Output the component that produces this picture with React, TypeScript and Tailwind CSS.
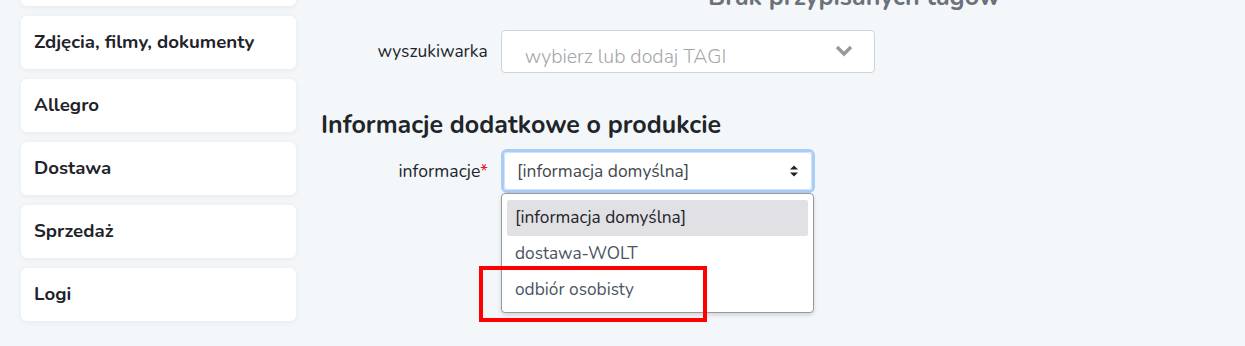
import React from "react";

const font = { fontFamily: '"Nunito", "Noto Sans", "Open Sans", sans-serif' };

function Card({ label }: { label: string }) {
  return (
    <div className="h-[53px] shrink-0 rounded-[6px] bg-white shadow-[0_1px_6px_rgba(0,0,0,0.06)] flex items-center px-[13px]">
      <span className="text-[18.7px] font-bold text-[#1f232a]">{label}</span>
    </div>
  );
}

export default function App() {
  return (
    <div
      className="w-[1245px] h-[346px] overflow-hidden bg-[#f4f7fa] flex"
      style={font}
    >
      <div className="ml-[21px] w-[275px] flex flex-col gap-[10px] mt-[-47px]">
        <Card label="" />
        <Card label="Zdjęcia, filmy, dokumenty" />
        <Card label="Allegro" />
        <Card label="Dostawa" />
        <Card label="Sprzedaż" />
        <Card label="Logi" />
      </div>

      <div className="ml-[25px] w-[554px] flex flex-col">
        <div className="mt-[-19px] h-[32px] pl-[387px] text-[25px] font-bold text-[#6b7177] whitespace-nowrap leading-[32px]">
          Brak przypisanych tagów
        </div>
        <div className="mt-[17px] flex items-center">
          <div className="w-[167px] text-right text-[17.4px] text-[#212529]">wyszukiwarka</div>
          <div className="ml-[13px] w-[375px] h-[43px] rounded-[4px] border border-[#cfd3d8] bg-white flex items-center pl-[23px] pr-[20px]">
            <span className="mt-[10px] text-[19.6px] text-[#a3a6a9] font-light">
              wybierz lub dodaj TAGI
            </span>
            <svg className="ml-auto mb-[2px]" width="20" height="14" viewBox="0 0 20 14">
              <path d="M3 3 L10 10 L17 3" fill="none" stroke="#999" strokeWidth="3.4" />
            </svg>
          </div>
        </div>
        <div className="mt-[36px] text-[25px] font-bold text-[#212529] leading-[32px] whitespace-nowrap">
          Informacje dodatkowe o produkcie
        </div>
        <div className="mt-[8px] flex items-center relative">
          <div className="w-[167px] text-right text-[17.6px] text-[#212529]">
            informacje<span className="text-[#e02020]">*</span>
          </div>
          <div className="ml-[13px] w-[314px] h-[44px] rounded-[6px] bg-white border-[3px] border-[#a9cdf7] flex items-center">
            <div className="flex-1 h-full rounded-[4px] border border-[#86b7fe]/40 flex items-center pl-[12px] pr-[12px]">
              <span className="text-[17.4px] text-[#43484d]">[informacja domyślna]</span>
              <svg className="ml-auto" width="10" height="14" viewBox="0 0 10 14">
                <path d="M1 5.5 L5 1.5 L9 5.5 Z" fill="#222" />
                <path d="M1 8.5 L5 12.5 L9 8.5 Z" fill="#222" />
              </svg>
            </div>
          </div>
          <div className="absolute left-[180px] top-[44px] w-[313px] h-[120px] rounded-[4px] border border-[#9a9a9a] bg-white shadow-[0_2px_4px_rgba(0,0,0,0.15)] px-[5px] pt-[6px] flex flex-col">
            <div className="h-[36px] shrink-0 rounded-[2px] bg-[#e1e0e5] flex items-center pl-[8px] text-[17.3px] text-[#212529]">
              [informacja domyślna]
            </div>
            <div className="h-[36px] shrink-0 flex items-center pl-[8px] text-[17.3px] text-[#4b5563]">dostawa-WOLT</div>
            <div className="h-[36px] shrink-0 flex items-center pl-[8px] text-[17.3px] text-[#4b5563]">odbiór osobisty</div>
          </div>
          <div className="absolute left-[158px] top-[117px] w-[228px] h-[56px] border-[4px] border-[#ff0000]" />
        </div>
      </div>
    </div>
  );
}
